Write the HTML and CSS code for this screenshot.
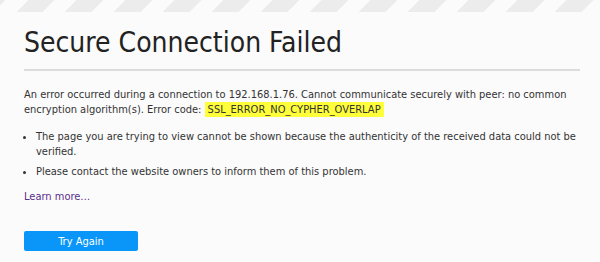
FILE: index.html
```html
<!DOCTYPE html>
<html>
<head>
<meta charset="utf-8">
<link rel="stylesheet" href="styles.css">
</head>
<body>
<div class="stripes"></div>
<main class="page">
  <h1 class="title">Secure Connection Failed</h1>
  <p class="desc">An error occurred during a connection to 192.168.1.76. Cannot communicate securely with peer: no common encryption algorithm(s). Error code: <span class="code">SSL_ERROR_NO_CYPHER_OVERLAP</span></p>
  <ul class="list">
    <li>The page you are trying to view cannot be shown because the authenticity of the received data could not be verified.</li>
    <li>Please contact the website owners to inform them of this problem.</li>
  </ul>
  <a class="learn" href="#">Learn more…</a>
  <div class="actions"><button class="retry">Try Again</button></div>
</main>
</body>
</html>
```
FILE: styles.css
```css
html, body {
  margin: 0;
  padding: 0;
  background: #fbfbfb;
}
body {
  font-family: "DejaVu Sans", sans-serif;
  font-stretch: condensed;
  color: #333;
  font-size: 11px;
}
.stripes {
  height: 12px;
  background: repeating-linear-gradient(135deg, #ececec 0 4.2px, #fbfbfb 4.2px 19.8px, #ececec 19.8px 34.6px);
}
.page {
  padding: 0 20px 0 24px;
}
.title {
  margin: 0;
  padding-top: 14px;
  font-size: 28px;
  font-weight: normal;
  line-height: 34px;
  color: #222;
  padding-bottom: 9px;
  border-bottom: 2px solid #dcdcdc;
}
.desc {
  margin: 16px 0 0;
  line-height: 15px;
}
.code {
  background: #ffff3a;
  padding: 1px 3px;
}
.list {
  margin: 12px 0 0;
  padding: 0 0 0 12px;
  line-height: 15px;
}
.list li {
  margin-bottom: 5px;
}
.learn {
  display: inline-block;
  margin-top: 6px;
  color: #5b2e8e;
  text-decoration: none;
}
.actions {
  margin-top: 28px;
}
.retry {
  width: 114px;
  height: 20px;
  border: 0;
  border-radius: 2px;
  background: #0996f8;
  color: #fff;
  font-family: inherit;
  font-stretch: condensed;
  font-size: 11px;
  padding: 0;
}
```
